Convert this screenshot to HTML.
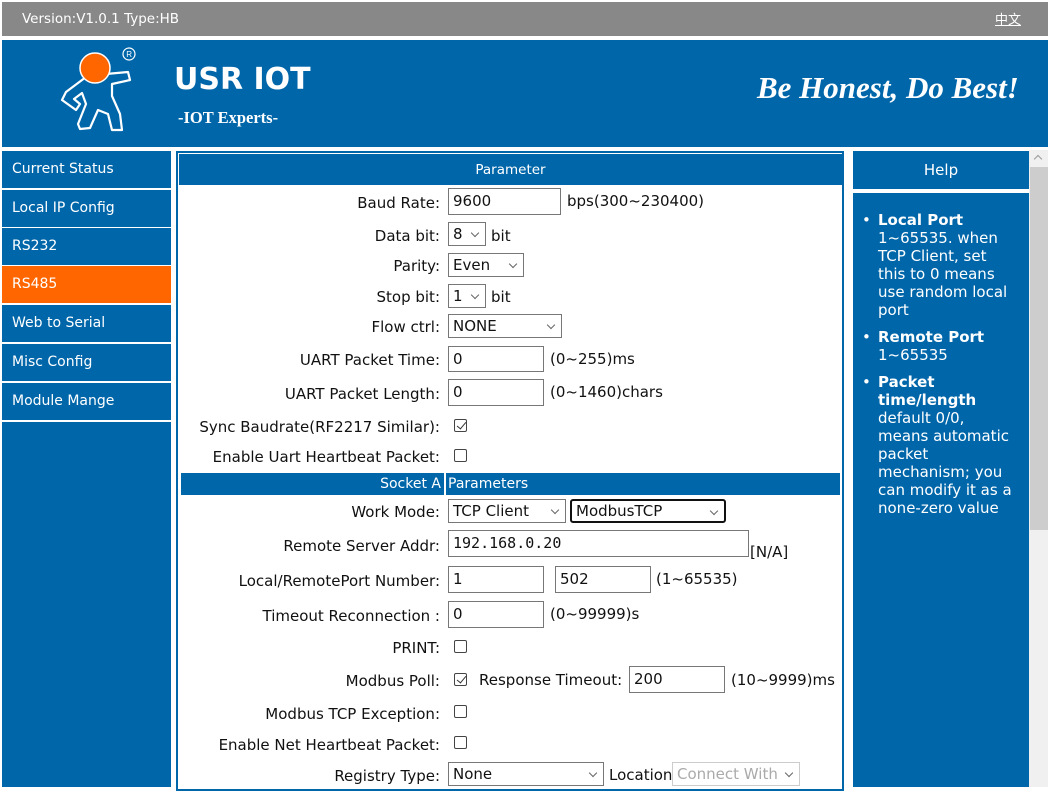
<!DOCTYPE html>
<html><head><meta charset="utf-8"><style>
*{margin:0;padding:0;box-sizing:border-box}
body{width:1050px;height:787px;overflow:hidden;background:#fff;font-family:"DejaVu Sans","Liberation Sans",sans-serif;font-size:15px;color:#111;position:relative}
div,span{position:absolute}
.b{background:#0066aa}
.nav{left:2px;width:169px;height:37px;background:#0066aa;color:#fff;padding:10px 0 0 10px;font-size:14px}
.l{left:176px;width:264px;text-align:right;line-height:18px}
.t{line-height:18px;white-space:nowrap}
.in{border:1px solid #777;background:#fff;padding:0 4px;line-height:25px;white-space:nowrap;font-size:15px}
.sel{border:1px solid #777;background:#fff;padding:0 4px;line-height:22px;white-space:nowrap;font-size:15px}
.sel:after{content:"";position:absolute;right:7px;top:7px;width:5px;height:5px;border-right:1.2px solid #666;border-bottom:1.2px solid #666;transform:rotate(45deg)}
.cb{width:13px;height:13px;border:1px solid #444;border-radius:2px;left:454px;background:#fff}
.ck:before{content:"";position:absolute;left:3.5px;top:0px;width:4px;height:8px;border-right:1.6px solid #333;border-bottom:1.6px solid #333;transform:rotate(40deg)}
.help{color:#fff;font-size:15px;line-height:18px}
</style></head><body>
<div style="left:2px;top:2px;width:1046px;height:34px;background:#888"></div>
<div class="t" style="left:22px;top:10px;color:#fff;font-size:13.5px">Version:V1.0.1 Type:HB</div>
<div class="t" style="left:995px;top:10px;color:#fff;font-size:13px;font-family:'Noto Sans CJK SC',sans-serif;text-decoration:underline">中文</div>
<div class="b" style="left:2px;top:40px;width:1046px;height:107px"></div>
<svg style="position:absolute;left:50px;top:40px" width="100" height="100" viewBox="0 0 100 100">
<path d="M36 37 L16 52 L12 60 L26 70 L30 64 L24 59 L32 53 L36 64 L28 84 L30 89 L40 88 L48 70 L58 74 L62 90 L72 90 L70 74 L62 56 L62 44 L80 40 L78 32 L56 34" fill="none" stroke="#fff" stroke-width="2.2" stroke-linejoin="round"/>
<circle cx="45" cy="28" r="15" fill="#ff6600" stroke="#fff" stroke-width="1.5"/>
<circle cx="79" cy="14" r="6" fill="none" stroke="#fff" stroke-width="1.2"/>
<text x="76.3" y="17" font-size="8" fill="#fff" font-family="Liberation Sans">R</text>
</svg>
<div class="t" style="left:174px;top:62px;color:#fff;font-weight:bold;font-size:30px;line-height:36px">USR IOT</div>
<div class="t" style="left:178px;top:109px;color:#fff;font-weight:bold;font-size:16.5px;font-family:'Liberation Serif',serif">-IOT Experts-</div>
<div class="t" style="left:757px;top:71px;color:#fff;font-weight:bold;font-style:italic;font-size:31px;line-height:34px;font-family:'Liberation Serif',serif">Be Honest, Do Best!</div>
<!-- left nav -->
<div class="b" style="left:2px;top:422px;width:169px;height:365px"></div>
<div class="nav" style="top:151px">Current Status</div>
<div class="nav" style="top:190px">Local IP Config</div>
<div class="nav" style="top:228px">RS232</div>
<div class="nav" style="top:266px;background:#ff6600">RS485</div>
<div class="nav" style="top:305px">Web to Serial</div>
<div class="nav" style="top:344px">Misc Config</div>
<div class="nav" style="top:383px">Module Mange</div>
<!-- main -->
<div style="left:176px;top:151px;width:668px;height:640px;border:2px solid #0066aa"></div>
<div class="b" style="left:179px;top:154px;width:663px;height:31px"></div>
<div class="t" style="left:179px;top:161px;width:663px;text-align:center;color:#fff;font-size:13.5px">Parameter</div>

<div class="l" style="top:194px">Baud Rate:</div>
<div class="in" style="left:448px;top:188px;width:113px;height:27px">9600</div>
<div class="t" style="left:567px;top:192px">bps(300~230400)</div>

<div class="l" style="top:227px">Data bit:</div>
<div class="sel" style="left:448px;top:222px;width:38px;height:24px">8</div>
<div class="t" style="left:491px;top:227px">bit</div>

<div class="l" style="top:257px">Parity:</div>
<div class="sel" style="left:448px;top:253px;width:76px;height:24px">Even</div>

<div class="l" style="top:288px">Stop bit:</div>
<div class="sel" style="left:448px;top:284px;width:38px;height:24px">1</div>
<div class="t" style="left:491px;top:288px">bit</div>

<div class="l" style="top:318px">Flow ctrl:</div>
<div class="sel" style="left:448px;top:314px;width:114px;height:24px">NONE</div>

<div class="l" style="top:351px">UART Packet Time:</div>
<div class="in" style="left:448px;top:346px;width:96px;height:26px">0</div>
<div class="t" style="left:550px;top:350px">(0~255)ms</div>

<div class="l" style="top:385px">UART Packet Length:</div>
<div class="in" style="left:448px;top:379px;width:96px;height:27px">0</div>
<div class="t" style="left:550px;top:383px">(0~1460)chars</div>

<div class="l" style="top:418px">Sync Baudrate(RF2217 Similar):</div>
<div class="cb ck" style="top:419px"></div>
<div class="l" style="top:448px">Enable Uart Heartbeat Packet:</div>
<div class="cb" style="top:449px"></div>

<div class="b" style="left:181px;top:473px;width:659px;height:22px"></div>
<div style="left:444px;top:473px;width:2px;height:22px;background:#fff"></div>
<div class="t" style="left:181px;top:475px;width:260px;text-align:right;color:#fff;font-size:14px">Socket A</div>
<div class="t" style="left:448px;top:475px;color:#fff;font-size:14px">Parameters</div>

<div class="l" style="top:503px">Work Mode:</div>
<div class="sel" style="left:448px;top:499px;width:118px;height:24px">TCP Client</div>
<div class="sel" style="left:570px;top:499px;width:156px;height:24px;border:2px solid #111;border-radius:3px;line-height:20px">ModbusTCP</div>

<div class="l" style="top:537px">Remote Server Addr:</div>
<div class="in" style="left:448px;top:530px;width:301px;height:27px;font-family:'DejaVu Sans Mono','Liberation Mono',monospace;font-size:15px">192.168.0.20</div>
<div class="t" style="left:750px;top:543px">[N/A]</div>

<div class="l" style="top:572px">Local/RemotePort Number:</div>
<div class="in" style="left:448px;top:566px;width:96px;height:27px">1</div>
<div class="in" style="left:555px;top:566px;width:96px;height:27px">502</div>
<div class="t" style="left:656px;top:570px">(1~65535)</div>

<div class="l" style="top:607px">Timeout Reconnection :</div>
<div class="in" style="left:448px;top:601px;width:96px;height:27px">0</div>
<div class="t" style="left:550px;top:605px">(0~99999)s</div>

<div class="l" style="top:639px">PRINT:</div>
<div class="cb" style="top:640px"></div>

<div class="l" style="top:672px">Modbus Poll:</div>
<div class="cb ck" style="top:673px"></div>
<div class="t" style="left:479px;top:671px">Response Timeout:</div>
<div class="in" style="left:629px;top:666px;width:96px;height:27px">200</div>
<div class="t" style="left:731px;top:671px">(10~9999)ms</div>

<div class="l" style="top:705px">Modbus TCP Exception:</div>
<div class="cb" style="top:705px"></div>
<div class="l" style="top:736px">Enable Net Heartbeat Packet:</div>
<div class="cb" style="top:736px"></div>

<div class="l" style="top:767px">Registry Type:</div>
<div class="sel" style="left:448px;top:762px;width:156px;height:24px">None</div>
<div class="t" style="left:609px;top:766px">Location</div>
<div class="sel" style="left:672px;top:762px;width:128px;height:24px;border-color:#ccc;color:#aaa">Connect With</div>

<!-- help -->
<div class="b" style="left:853px;top:151px;width:176px;height:38px"></div>
<div class="t" style="left:853px;top:161px;width:176px;text-align:center;color:#fff">Help</div>
<div class="b" style="left:853px;top:193px;width:176px;height:594px"></div>
<div class="help" style="left:858px;top:211px;width:156px">
<div style="position:relative;padding-left:20px"><span style="left:4px;top:0">•</span><b>Local Port</b><br>1~65535. when TCP Client, set this to 0 means use random local port</div>
<div style="position:relative;padding-left:20px;margin-top:9px"><span style="left:4px;top:0">•</span><b>Remote Port</b><br>1~65535</div>
<div style="position:relative;padding-left:20px;margin-top:9px"><span style="left:4px;top:0">•</span><b>Packet time/length</b><br>default 0/0, means automatic packet mechanism; you can modify it as a none-zero value</div>
</div>
<!-- scrollbar -->
<div style="left:1029px;top:150px;width:19px;height:637px;background:#f0f0f0"></div>
<div style="left:1030px;top:167px;width:18px;height:363px;background:#cdcdcd"></div>
<div style="left:1035px;top:156px;width:6px;height:6px;border-left:1.3px solid #999;border-top:1.3px solid #999;transform:rotate(45deg)"></div>
</body></html>
